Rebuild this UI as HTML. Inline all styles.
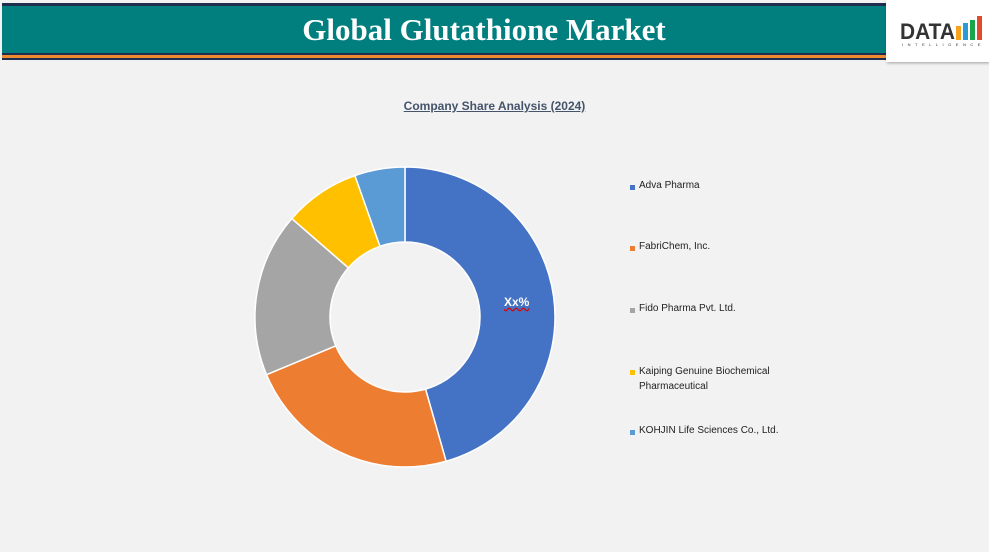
<!DOCTYPE html>
<html><head><meta charset="utf-8"><style>
html,body{margin:0;padding:0}
body{width:989px;height:552px;background:#f2f2f2;position:relative;overflow:hidden;font-family:"Liberation Sans",sans-serif}
.hdr{position:absolute;left:2px;width:884px}
.t{position:absolute;left:2px;top:6px;width:884px;height:47px;background:#007f7e;color:#fff;font-family:"Liberation Serif",serif;font-weight:bold;font-size:31px;line-height:47px}
.t span{position:absolute;left:482px;transform:translateX(-50%);white-space:nowrap}
.logo{position:absolute;left:886px;top:0;width:103px;height:62px;background:#fff;box-shadow:1px 1px 3px rgba(0,0,0,.35)}
.lg{position:absolute;font-size:10px;color:#222;left:639px}
.sq{position:absolute;width:5px;height:5px;left:630px}
</style></head><body>
<div class="hdr" style="top:3px;height:3px;background:#1f2d4e"></div>
<div class="t"><span>Global Glutathione Market</span></div>
<div class="hdr" style="top:53px;height:2px;background:#1f2d4e"></div>
<div class="hdr" style="top:55px;height:3px;background:#f08a30"></div>
<div class="hdr" style="top:58px;height:2px;background:#1f2d4e"></div>
<div class="logo">
<div style="position:absolute;left:14px;top:19px;font-weight:bold;font-size:22px;color:#333;transform:scaleX(0.95);transform-origin:left">DATA</div>
<div style="position:absolute;left:70px;top:26px;width:5px;height:14px;background:#f7a21c"></div>
<div style="position:absolute;left:77px;top:23px;width:5px;height:17px;background:#2a9bd6"></div>
<div style="position:absolute;left:84px;top:20px;width:5px;height:20px;background:#1aa54b"></div>
<div style="position:absolute;left:91px;top:16px;width:5px;height:24px;background:#e24a2b"></div>
<div style="position:absolute;left:16px;top:42px;font-size:4px;letter-spacing:4.5px;color:#333">INTELLIGENCE</div>
</div>
<div style="position:absolute;left:0;width:989px;top:99px;text-align:center;font-size:12px;font-weight:bold;color:#44546a"><span style="display:inline-block;text-decoration:underline">Company Share Analysis (2024)</span></div>
<svg id="s" width="989" height="552" style="position:absolute;left:0;top:0"></svg>
<div style="position:absolute;left:504px;top:295px;color:#fff;font-weight:bold;font-size:12px;text-decoration:underline wavy #d00">Xx%</div>
<div class="sq" style="top:185px;background:#4472c4"></div><div class="lg" style="top:180px">Adva Pharma</div>
<div class="sq" style="top:246px;background:#ed7d31"></div><div class="lg" style="top:241px">FabriChem, Inc.</div>
<div class="sq" style="top:308px;background:#a5a5a5"></div><div class="lg" style="top:303px">Fido Pharma Pvt. Ltd.</div>
<div class="sq" style="top:370px;background:#ffc000"></div><div class="lg" style="top:364px;line-height:15px">Kaiping Genuine Biochemical<br>Pharmaceutical</div>
<div class="sq" style="top:430px;background:#5b9bd5"></div><div class="lg" style="top:425px">KOHJIN Life Sciences Co., Ltd.</div>
<script>
var cx=405,cy=317,R=150,r=75;
var a=[0,164.1,247.4,311,340.5,360],c=["#4472c4","#ed7d31","#a5a5a5","#ffc000","#5b9bd5"];
function p(ang,rad){var t=ang*Math.PI/180;return [cx+rad*Math.sin(t),cy-rad*Math.cos(t)];}
var h="";
for(var i=0;i<5;i++){var s=a[i],e=a[i+1],l=(e-s)>180?1:0;
var A=p(s,R),B=p(e,R),C=p(e,r),D=p(s,r);
h+='<path d="M'+A+' A'+R+' '+R+' 0 '+l+' 1 '+B+' L'+C+' A'+r+' '+r+' 0 '+l+' 0 '+D+' Z" fill="'+c[i]+'" stroke="#fff" stroke-width="1.5"/>';}
document.getElementById("s").innerHTML=h;
</script>
</body></html>
